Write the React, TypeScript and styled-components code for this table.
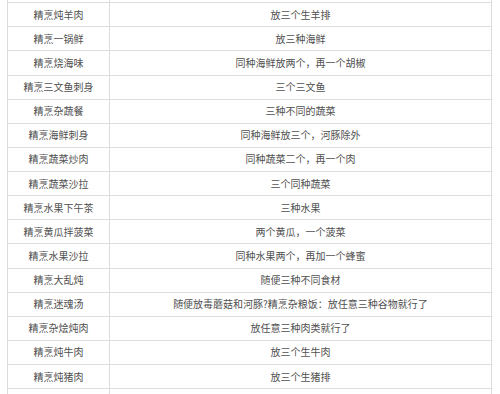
import styled, { createGlobalStyle } from "styled-components";

const GlobalStyle = createGlobalStyle`
  html, body {
    margin: 0;
    padding: 0;
    background: #ffffff;
  }
  body {
    width: 500px;
    height: 394px;
    overflow: hidden;
  }
`;

const Page = styled.div`
  width: 500px;
  height: 394px;
  overflow: hidden;
  padding-left: 7px;
  box-sizing: border-box;
`;

const Table = styled.div`
  width: 485px;
  margin-top: -21px;
  border-left: 1px solid #dcdcdc;
  border-right: 1px solid #dcdcdc;
  box-sizing: border-box;
  font-family: "Noto Sans CJK SC", "Noto Sans", sans-serif;
  font-size: 10px;
  color: #505050;
`;

const Row = styled.div`
  display: grid;
  grid-template-columns: 102px 1fr;
  height: 24.125px;
  border-bottom: 1px solid #dedede;
  box-sizing: border-box;
`;

const Cell = styled.div<{ divider?: boolean }>`
  display: flex;
  align-items: center;
  justify-content: center;
  white-space: nowrap;
  line-height: 1;
  border-right: ${(p) => (p.divider ? "1px solid #dcdcdc" : "none")};
`;

const rows: [string, string][] = [
  ["", ""],
  ["精烹炖羊肉", "放三个生羊排"],
  ["精烹一锅鲜", "放三种海鲜"],
  ["精烹烧海味", "同种海鲜放两个，再一个胡椒"],
  ["精烹三文鱼刺身", "三个三文鱼"],
  ["精烹杂蔬餐", "三种不同的蔬菜"],
  ["精烹海鲜刺身", "同种海鲜放三个，河豚除外"],
  ["精烹蔬菜炒肉", "同种蔬菜二个，再一个肉"],
  ["精烹蔬菜沙拉", "三个同种蔬菜"],
  ["精烹水果下午茶", "三种水果"],
  ["精烹黄瓜拌菠菜", "两个黄瓜，一个菠菜"],
  ["精烹水果沙拉", "同种水果两个，再加一个蜂蜜"],
  ["精烹大乱炖", "随便三种不同食材"],
  ["精烹迷魂汤", "随便放毒蘑菇和河豚?精烹杂粮饭：放任意三种谷物就行了"],
  ["精烹杂烩炖肉", "放任意三种肉类就行了"],
  ["精烹炖牛肉", "放三个生牛肉"],
  ["精烹炖猪肉", "放三个生猪排"],
  ["", ""],
];

export default function App() {
  return (
    <Page>
      <GlobalStyle />
      <Table>
        {rows.map(([name, recipe], i) => (
          <Row key={i}>
            <Cell divider>{name}</Cell>
            <Cell>{recipe}</Cell>
          </Row>
        ))}
      </Table>
    </Page>
  );
}
